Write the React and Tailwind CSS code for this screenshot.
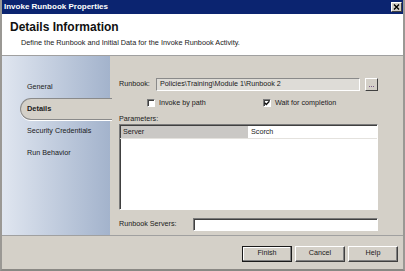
import React from "react";

const font = { fontFamily: '"Liberation Sans", Arial, sans-serif' };

const NavItem = ({ label, active }) =>
  active ? (
    <div className="ml-[18px] -mr-[2px] flex h-[22px] items-center rounded-l-[11px] border-y border-l border-[#8a8a8a] bg-[#d4d0c8] pl-[6px] text-[7.4px] font-bold text-[#1a1a1a] shadow-[0_1px_0_#ffffff]">
      {label}
    </div>
  ) : (
    <div className="flex h-[22px] items-center pl-[25px] text-[7.2px] text-[#1a1a1a]">{label}</div>
  );

const Checkbox = ({ checked, label }) => (
  <div className="flex items-center gap-[4px]">
    <div className="flex h-[8px] w-[8px] items-center justify-center border border-b-white border-l-[#7a7a7a] border-r-white border-t-[#7a7a7a] bg-white shadow-[inset_1px_1px_0_#404040]">
      {checked && (
        <svg width="6" height="6" viewBox="0 0 6 6">
          <path d="M0.6 2.8 L2.3 4.5 L5.4 1.2" stroke="#111" strokeWidth="1.3" fill="none" />
        </svg>
      )}
    </div>
    <span className="text-[7.2px] text-[#1a1a1a]">{label}</span>
  </div>
);

const Button = ({ label, primary }) => (
  <button
    className={
      "flex h-[16px] w-[50px] items-center justify-center bg-[#d4d0c8] text-[7.2px] text-[#1a1a1a] " +
      (primary
        ? "border border-[#1a1a1a] shadow-[inset_-1px_-1px_0_#808080,inset_1px_1px_0_#ffffff]"
        : "border border-b-[#404040] border-l-white border-r-[#404040] border-t-white shadow-[inset_-1px_-1px_0_#808080]")
    }
  >
    {label}
  </button>
);

export default function App() {
  return (
    <div style={font} className="flex h-[271px] w-[405px] flex-col border-x-2 border-b-2 border-x-[#9a9894] border-b-[#8a8884] bg-[#d4d0c8]">
      <div className="flex h-[14px] shrink-0 items-center justify-between bg-[#0b2470] pl-[2px] pr-[1px]">
        <span className="text-[8px] font-bold text-white">Invoke Runbook Properties</span>
        <div className="flex h-[10px] w-[11px] items-center justify-center border border-b-[#404040] border-l-white border-r-[#404040] border-t-white bg-[#d4d0c8]">
          <svg width="7" height="6" viewBox="0 0 7 6">
            <path d="M1 0.5 L6 5.5 M6 0.5 L1 5.5" stroke="#000" strokeWidth="1.4" />
          </svg>
        </div>
      </div>

      <div className="flex h-[42px] shrink-0 flex-col border-b border-[#a0a0a0] bg-white pl-[8px] pt-[7px]">
        <div className="text-[12px] font-bold leading-[13px] text-[#111]">Details Information</div>
        <div className="mt-[5px] pl-[11px] text-[7.3px] leading-[8px] text-[#1a1a1a]">
          Define the Runbook and Initial Data for the Invoke Runbook Activity.
        </div>
      </div>

      <div className="flex h-[180px] shrink-0 border-b border-[#a0a0a0]">
        <div className="flex w-[108px] shrink-0 flex-col bg-gradient-to-r from-[#e0e6f0] to-[#a3b3cc] pt-[20px]">
          <NavItem label="General" />
          <NavItem label="Details" active />
          <NavItem label="Security Credentials" />
          <NavItem label="Run Behavior" />
        </div>

        <div className="flex flex-1 flex-col pl-[9px] pr-[23px] pt-[21px]">
          <div className="flex h-[14px] items-center">
            <span className="w-[37px] text-[7.2px] text-[#1a1a1a]">Runbook:</span>
            <div className="flex h-[13px] w-[204px] items-center border border-b-white border-l-[#8a8a8a] border-r-white border-t-[#8a8a8a] bg-[#dedcd7] pl-[3px] text-[7.2px] text-[#1a1a1a]">
              Policies\Training\Module 1\Runbook 2
            </div>
            <div className="ml-[5px] flex h-[13px] w-[13px] items-end justify-center border border-b-[#404040] border-l-white border-r-[#404040] border-t-white pb-[3px]">
              <div className="flex gap-[1px]">
                <div className="h-[1px] w-[1px] bg-[#7a5a8a]" />
                <div className="h-[1px] w-[1px] bg-[#7a5a8a]" />
                <div className="h-[1px] w-[1px] bg-[#7a5a8a]" />
              </div>
            </div>
          </div>

          <div className="mt-[7px] flex h-[10px] items-center pl-[28px]">
            <div className="w-[116px]">
              <Checkbox label="Invoke by path" />
            </div>
            <Checkbox label="Wait for completion" checked />
          </div>

          <div className="mt-[7px] text-[7.2px] leading-[8px] text-[#1a1a1a]">Parameters:</div>
          <div className="mt-[1px] h-[86px] w-[259px] border border-b-white border-l-[#7a7a7a] border-r-white border-t-[#7a7a7a] bg-white shadow-[inset_1px_1px_0_#404040]">
            <div className="flex h-[14px] border-b border-[#e4e2de] pt-[1px] pl-[1px]">
              <div className="flex w-[127px] items-center bg-[#cac8c5] pl-[2px] text-[7.2px] text-[#1a1a1a]">Server</div>
              <div className="flex flex-1 items-center pl-[3px] text-[7.2px] text-[#1a1a1a]">Scorch</div>
            </div>
          </div>

          <div className="mt-[8px] flex h-[13px] items-center">
            <span className="w-[74px] text-[7.2px] text-[#1a1a1a]">Runbook Servers:</span>
            <div className="h-[13px] w-[185px] border border-b-white border-l-[#7a7a7a] border-r-white border-t-[#7a7a7a] bg-white shadow-[inset_1px_1px_0_#404040]" />
          </div>
        </div>
      </div>

      <div className="flex flex-1 items-center justify-end gap-[3px] pr-[5px] pt-[2px]">
        <Button label="Finish" primary />
        <Button label="Cancel" />
        <Button label="Help" />
      </div>
    </div>
  );
}
